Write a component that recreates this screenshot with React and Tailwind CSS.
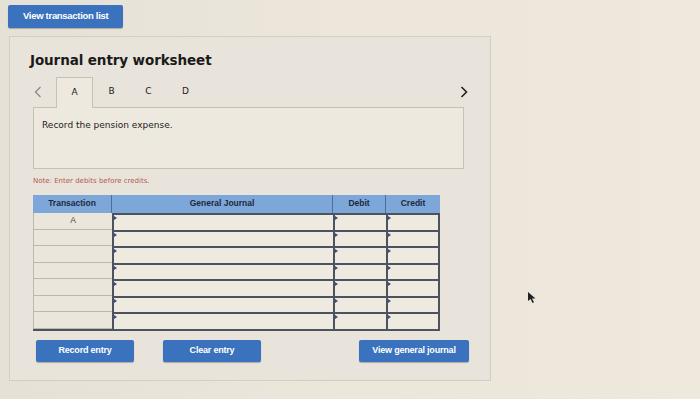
import React from "react";

const rowH = ["h-[17px]", "h-[16px]", "h-[17px]", "h-[16px]", "h-[17px]", "h-[16px]", "h-[17px]"];

function Marker() {
  return (
    <span className="absolute left-0 top-[1px] w-0 h-0 border-t-[2.5px] border-b-[2.5px] border-l-[3.5px] border-t-transparent border-b-transparent border-l-[#2f4f86]" />
  );
}

function Btn({ children, w }) {
  return (
    <div
      className={`${w} h-[22px] flex items-center justify-center bg-[#3b72bd] text-white font-bold text-[9px] tracking-[-0.2px] rounded-[2px] shadow-[0_1px_1px_rgba(0,0,0,0.25)]`}
      style={{ fontFamily: '"Liberation Sans", Arial, sans-serif' }}
    >
      {children}
    </div>
  );
}

export default function App() {
  return (
    <div
      className="relative w-[700px] h-[399px] overflow-hidden bg-gradient-to-r from-[#e6e1d7] via-[#ece6db] to-[#efe8dc] pt-[5px] pl-[8px]"
      style={{ fontFamily: '"DejaVu Sans", Verdana, sans-serif' }}
    >
      <div
        className="w-[115px] h-[23px] flex items-center pl-[15px] bg-[#3b72bd] text-white font-bold text-[9.5px] tracking-[-0.3px] rounded-[2px] shadow-[0_1px_1px_rgba(0,0,0,0.25)]"
        style={{ fontFamily: '"Liberation Sans", Arial, sans-serif' }}
      >
        View transaction list
      </div>

      <div className="mt-[8px] ml-[1px] w-[482px] h-[345px] border border-[#d3cec4] bg-[#e9e4db] pt-[14px] pl-[20px]">
        <div className="text-[13.5px] font-bold text-[#1a1a1a] leading-[18px] tracking-[-0.1px]">Journal entry worksheet</div>

        <div className="mt-[8px] ml-[3px] w-[431px]">
          <div className="flex h-[30px] items-stretch relative">
            <div className="w-[23px] flex items-center text-[#888] text-[13px] pl-[1px]">
              <svg width="8" height="12" viewBox="0 0 8 12"><path d="M6.5 1 L1.5 6 L6.5 11" fill="none" stroke="#8a8a8a" strokeWidth="1.3" /></svg>
            </div>
            <div className="w-[37px] border border-b-0 border-[#c6c1b6] bg-[#eee9df] flex items-center justify-center text-[9px] text-[#222] relative z-10 -mb-[1px]">A</div>
            <div className="w-[37px] flex items-center justify-center text-[9px] text-[#222]">B</div>
            <div className="w-[37px] flex items-center justify-center text-[9px] text-[#222]">C</div>
            <div className="w-[37px] flex items-center justify-center text-[9px] text-[#222]">D</div>
            <div className="flex-1 flex items-center justify-end pr-[0px]">
              <svg width="8" height="12" viewBox="0 0 8 12" className="-mr-[4px]"><path d="M1.5 1 L6.5 6 L1.5 11" fill="none" stroke="#222" strokeWidth="1.6" /></svg>
            </div>
          </div>
          <div className="h-[62px] border border-[#c6c1b6] bg-[#eee9df] pt-[11px] pl-[8px] text-[9px] text-[#222]">
            Record the pension expense.
          </div>
        </div>

        <div className="mt-[7px] ml-[3px] text-[7px] text-[#b45a4c]">Note: Enter debits before credits.</div>

        <div
          className="mt-[8px] ml-[3px] w-[407px]"
          style={{ fontFamily: '"Liberation Sans", Arial, sans-serif' }}
        >
          <div className="grid grid-cols-[79px_221px_53px_54px] h-[18px] bg-[#7ea7d9] text-[#1c2940] font-bold text-[8.5px]">
            <div className="flex items-center justify-center border-r border-[#4b6f9f]">Transaction</div>
            <div className="flex items-center justify-center border-r border-[#4b6f9f]">General Journal</div>
            <div className="flex items-center justify-center border-r border-[#4b6f9f]">Debit</div>
            <div className="flex items-center justify-center">Credit</div>
          </div>
          <div className="border-b-2 border-[#4d5260]">
            {rowH.map((h, i) => (
              <div key={i} className={`grid grid-cols-[79px_221px_53px_54px] ${h}`}>
                <div className="border-l border-b border-[#bdb8ae] bg-[#ebe6dc] flex items-center justify-center text-[8.5px] text-[#444]">
                  {i === 0 ? "A" : ""}
                </div>
                <div className="relative border-l-2 border-t-2 border-[#4d5260] bg-[#efeadf]"><Marker /></div>
                <div className="relative border-l-2 border-t-2 border-[#4d5260] bg-[#efeadf]"><Marker /></div>
                <div className="relative border-l-2 border-t-2 border-r-2 border-[#4d5260] bg-[#efeadf]"><Marker /></div>
              </div>
            ))}
          </div>
        </div>

        <div className="mt-[9px] ml-[6px] flex w-[433px]">
          <Btn w="w-[98px]">Record entry</Btn>
          <div className="w-[29px]" />
          <Btn w="w-[98px]">Clear entry</Btn>
          <div className="flex-1" />
          <Btn w="w-[110px]">View general journal</Btn>
        </div>
      </div>

      <svg className="absolute left-[527px] top-[291px]" width="10" height="13" viewBox="0 0 10 13">
        <path d="M1 1 L1 10 L3.5 8 L5.5 12 L7 11.3 L5 7.5 L8.5 7.5 Z" fill="#222" />
      </svg>
    </div>
  );
}
